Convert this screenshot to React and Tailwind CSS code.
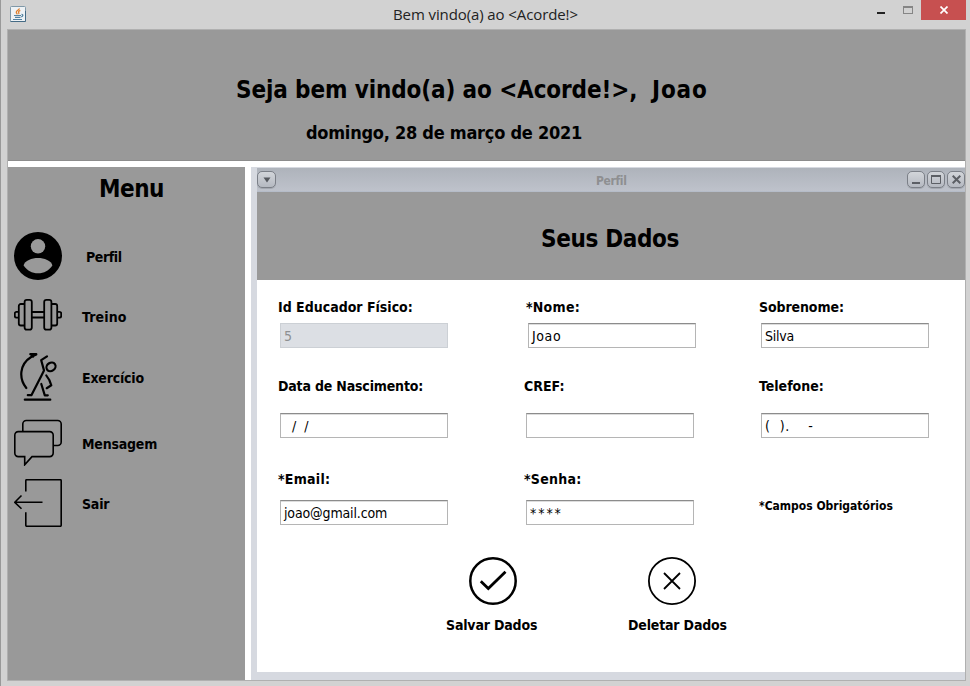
import React from "react";

const sans = "font-['DejaVu_Sans_Condensed','DejaVu_Sans',sans-serif] [font-stretch:condensed]";

function JavaIcon() {
  return (
    <svg width="16" height="16" viewBox="0 0 16 16" fill="none">
      <rect x="0.5" y="0.5" width="15" height="15" rx="1" fill="#eef2f5" stroke="#7f98a8" />
      <path d="M.5 15.5h15V5" stroke="#456b85" />
      <path d="M9.3 2.3C9.5 4 6 4.600 6.300 6.300c.1.8.8 1.200 1 2M10.300 4.300c-1.500.7-2.300 1.300-1.500 2.500.3.500 0 1-.3 1.300" stroke="#e0812f" strokeWidth="1.300" />
      <path d="M4 9.500h7M5 11.300h5.500M3 13.500h9M11.500 8.500c2-.3 1.700 2-.3 2.300" stroke="#5382a1" strokeWidth="1.200" />
    </svg>
  );
}

function TitleBar() {
  return (
    <header className="flex h-[29px] pl-2.5 pr-1">
      <div className="pt-1.5"><JavaIcon /></div>
      <div className="flex-1 pl-[367px] pt-1 text-[15px] leading-5 text-[#222] tracking-[-0.1px] whitespace-nowrap font-['Open_Sans',sans-serif] [font-stretch:normal]">
        Bem vindo(a) ao &lt;Acorde!&gt;
      </div>
      <div className="flex items-start">
        <div className="mt-3 mr-[18px] h-0.5 w-2 bg-[#222]" />
        <div className="mt-1.5 mr-2 h-2 w-2.5 border border-t-2 border-[#858585]" />
        <div className="flex h-5 w-[45px] items-center justify-center bg-[#c75050]">
          <svg width="8" height="8" viewBox="0 0 8 8" stroke="#fff" strokeWidth="1.7"><path d="M.5.5l7 7M7.500.5l-7 7" /></svg>
        </div>
      </div>
    </header>
  );
}

function UserIcon() {
  return (
    <svg width="48" height="48" viewBox="0 0 48 48">
      <circle cx="24" cy="24" r="24" fill="#000" />
      <circle cx="24" cy="14.300" r="7.200" fill="#999" />
      <path d="M9.600 33.500C10.500 28.500 18 26 24 26s13.500 2.500 14.400 7.500C35 38.500 30 41.300 24 41.300S13 38.500 9.600 33.500z" fill="#999" />
    </svg>
  );
}

function DumbbellIcon() {
  return (
    <svg width="48" height="48" viewBox="0 0 48 48" fill="none" stroke="#000" strokeWidth="1.800">
      <rect x="10.600" y="8.800" width="7.200" height="29.800" rx="2.200" />
      <rect x="30.200" y="8.800" width="7.200" height="29.800" rx="2.200" />
      <path d="M10.600 13H6.800a2 2 0 0 0-2 2v17.500a2 2 0 0 0 2 2h3.800M37.400 13h3.800a2 2 0 0 1 2 2v17.500a2 2 0 0 1-2 2h-3.800" />
      <path d="M4.800 20.800H2.500a1.700 1.700 0 0 0-1.700 1.700V25a1.700 1.700 0 0 0 1.700 1.700h2.300M43.200 20.800h2.300a1.700 1.700 0 0 1 1.700 1.700V25a1.700 1.700 0 0 1-1.700 1.700h-2.300M17.800 21h12.400M17.800 26.500h12.400" />
    </svg>
  );
}

function ExerciseIcon() {
  return (
    <svg width="48" height="48" viewBox="0 0 48 48" fill="none" stroke="#000" strokeWidth="2.200" strokeLinecap="round" strokeLinejoin="round">
      <path d="M12.300 35C5 26 4.800 11.500 17.500 3.700L22.300 1.500M16.300 1.200h6M17 1.500l2 2.200" />
      <path d="M33 3.300l-5.800 3.900 2.800 10.200-2.600 5.300-10 19.500h-3.600" />
      <ellipse cx="37" cy="13.800" rx="4.800" ry="4" transform="rotate(-35 37 13.800)" />
      <path d="M32.300 22.500l3 4.500 2 5.300-4.600 2.900M27.300 31l3.500 11.300h3" />
      <path d="M10.800 46.700h25.500" />
    </svg>
  );
}

function MessageIcon() {
  return (
    <svg width="48" height="48" viewBox="0 0 48 48" fill="none" stroke="#000" strokeWidth="1.600">
      <path d="M8.800 13.600V6a3.500 3.500 0 0 1 3.500-3.500h31.400A3.500 3.500 0 0 1 47.200 6v18a3.500 3.500 0 0 1-3.500 3.500h-4.500" />
      <path d="M4.300 13.600h31.400a3.500 3.500 0 0 1 3.500 3.500v18a3.500 3.500 0 0 1-3.500 3.500H18l-7.300 8.200v-8.200H4.300a3.500 3.500 0 0 1-3.500-3.500v-18a3.500 3.500 0 0 1 3.500-3.500z" />
    </svg>
  );
}

function ExitIcon() {
  return (
    <svg width="48" height="48" viewBox="0 0 48 48" fill="none" stroke="#000" strokeWidth="1.600">
      <path d="M11.800 12.500V1.700a1 1 0 0 1 1-1h33.400a1 1 0 0 1 1 1v44.600a1 1 0 0 1-1 1H12.800a1 1 0 0 1-1-1V33.300" />
      <path d="M28.500 23.300H1M7.500 16.500l-6.700 6.800 6.700 6.500" />
    </svg>
  );
}

const menu = [
  { label: "Perfil", Icon: UserIcon, row: "", text: "pt-0.5 pl-6 tracking-[-0.4px]" },
  { label: "Treino", Icon: DumbbellIcon, row: "mt-[11px]", text: "pt-1 pl-5 tracking-[0.15px]" },
  { label: "Exercício", Icon: ExerciseIcon, row: "mt-3.5", text: "pt-0.5 pl-5 tracking-[-0.2px]" },
  { label: "Mensagem", Icon: MessageIcon, row: "mt-[17px]", text: "pt-1 pl-5 tracking-[-0.2px]" },
  { label: "Sair", Icon: ExitIcon, row: "mt-[13px]", text: "pt-0.5 pl-5 tracking-[-0.2px]" },
];

function Sidebar() {
  return (
    <aside className="w-[237px] shrink-0 bg-[#999] pt-[7px]">
      <h2 className="pl-[91px] text-2xl leading-[30px] font-bold tracking-[-0.5px]">Menu</h2>
      <nav className="pt-7 pl-1.5">
        {menu.map(({ label, Icon, row, text }) => (
          <div key={label} className={`flex h-12 items-center ${row}`}>
            <Icon />
            <span className={`text-sm leading-5 font-bold ${text}`}>{label}</span>
          </div>
        ))}
      </nav>
    </aside>
  );
}

const frameButton =
  "flex h-[17px] items-center justify-center rounded-[5px] border border-[#7b7f87] bg-linear-to-b from-[#d2d5da] to-[#b5b9c1] shadow-[0_1px_0_#a4a8b0]";

function FrameBar() {
  return (
    <div className="flex h-[25px] items-start border-t border-b border-t-[#d6d9e0] border-b-[#b5bcc8] bg-linear-to-b from-[#aeb3bb] to-[#bec2cb] pt-[3px]">
      <div className={`w-[19px] ${frameButton}`}>
        <svg width="8" height="6" viewBox="0 0 8 6"><path d="M.5.5h7L4 5.500z" fill="#55585e" /></svg>
      </div>
      <div className="flex-1 pt-px pl-80 text-xs leading-[18px] font-bold tracking-[-0.35px] text-[#8e8f91]">Perfil</div>
      <div className="flex gap-0.5">
        <div className={`w-[18px] ${frameButton}`}>
          <svg width="8" height="10"><path d="M0 8h8" stroke="#5c5f65" strokeWidth="2" /></svg>
        </div>
        <div className={`w-[18px] ${frameButton}`}>
          <svg width="10" height="9" fill="none" stroke="#5c5f65"><path d="M.5 0v8.500h9V0" /><path d="M0 1h10" strokeWidth="2" /></svg>
        </div>
        <div className={`w-[18px] ${frameButton}`}>
          <svg width="9" height="9" stroke="#5c5f65" strokeWidth="2"><path d="M.7.7l7.600 7.600M8.300.7L.7 8.300" /></svg>
        </div>
      </div>
    </div>
  );
}

function Field({ label, value, gap, width, disabled, tracking = "", valueClass = "" }) {
  return (
    <div className={width}>
      <div className={`text-sm leading-5 font-bold whitespace-nowrap ${tracking}`}>{label}</div>
      <div
        className={`ml-0.5 h-[25px] w-[168px] border pl-[3px] text-sm leading-[24px] whitespace-pre ${gap} ${valueClass} ${
          disabled
            ? "border-[#ccd0d5] bg-[#dcdfe4] text-[#8e8f91]"
            : "border-[#b5b5b5] border-t-[#8c8c8c] bg-white shadow-[inset_0_1px_0_#ddd]"
        }`}
      >
        {value}
      </div>
    </div>
  );
}

function ProfileFrame() {
  return (
    <section className="flex flex-1 flex-col border-l-6 border-b-8 border-[#d6d9e0] bg-white">
      <FrameBar />
      <div className="h-[88px] bg-[#999] pt-8 pl-[284px]">
        <h2 className="text-2xl leading-[30px] font-bold tracking-[-0.35px]">Seus Dados</h2>
      </div>
      <form className="pt-[17px] pl-[21px]">
        <div className="flex">
          <Field label="Id Educador Físico:" value="5" gap="mt-1.5" width="w-[248px]" disabled />
          <Field label="*Nome:" value="Joao" gap="mt-1.5" width="w-[233px]" tracking="tracking-[0.25px]" valueClass="tracking-[0.6px]" />
          <Field label="Sobrenome:" value="Silva" gap="mt-1.5" width="w-[170px]" tracking="tracking-[-0.1px]" valueClass="tracking-[-0.25px]" />
        </div>
        <div className="mt-7 flex">
          <Field label="Data de Nascimento:" value={"  /  /"} gap="mt-[17px]" width="w-[246px]" tracking="tracking-[-0.18px]" />
          <Field label="CREF:" value="" gap="mt-[17px]" width="w-[235px]" />
          <Field label="Telefone:" value={"(  ).    -"} gap="mt-[17px]" width="w-[170px]" valueClass="tracking-[0.6px]" />
        </div>
        <div className="mt-[31px] flex">
          <Field label="*Email:" value="joao@gmail.com" gap="mt-[11px]" width="w-[246px]" tracking="tracking-[0.25px]" valueClass="tracking-[-0.14px]" />
          <Field label="*Senha:" value="****" gap="mt-[11px]" width="w-[235px]" tracking="tracking-[0.25px]" valueClass="tracking-[1.9px]" />
          <div className="mt-[27px] text-xs leading-5 font-bold">*Campos Obrigatórios</div>
        </div>
        <div className="mt-8 flex pl-[168px] text-sm leading-5 font-bold tracking-[-0.17px]">
          <div className="w-[182px]">
            <svg className="ml-[23px]" width="48" height="48" viewBox="0 0 48 48" fill="none" stroke="#000" strokeWidth="2.500">
              <circle cx="24" cy="24" r="22.700" />
              <path d="M11.800 24.300l7.500 7.200L36.500 14.800" strokeWidth="2.800" />
            </svg>
            <div className="mt-2.5">Salvar Dados</div>
          </div>
          <div>
            <svg className="ml-5" width="48" height="48" viewBox="0 0 48 48" fill="none" stroke="#000" strokeWidth="1.800">
              <circle cx="24" cy="24" r="23.100" />
              <path d="M16 16l16 16M32 16L16 32" />
            </svg>
            <div className="mt-2.5">Deletar Dados</div>
          </div>
        </div>
      </form>
    </section>
  );
}

export default function App() {
  return (
    <div className={`flex h-[686px] w-[970px] flex-col overflow-hidden border-l border-[#999] bg-[#d2d2d2] text-black ${sans}`}>
      <div className="-ml-px"><TitleBar /></div>
      <main className="ml-1.5 flex h-[652px] w-[959px] flex-col border border-[#b0b0b0] bg-white">
        <div className="h-[131px] shrink-0 border-b border-[#8c8c8c] bg-[#999] pt-[45px] whitespace-pre">
          <h1 className="pl-[228px] text-2xl leading-[30px] font-bold">
            <span className="tracking-[-0.12px]">Seja bem vindo(a) ao &lt;Acorde!&gt;,  </span>
            <span className="tracking-[0.8px]">Joao</span>
          </h1>
          <p className="mt-4 pl-[298px] text-lg leading-6 font-bold tracking-[-0.25px]">domingo, 28 de março de 2021</p>
        </div>
        <div className="mt-1.5 flex flex-1 gap-1.5">
          <Sidebar />
          <ProfileFrame />
        </div>
      </main>
    </div>
  );
}
